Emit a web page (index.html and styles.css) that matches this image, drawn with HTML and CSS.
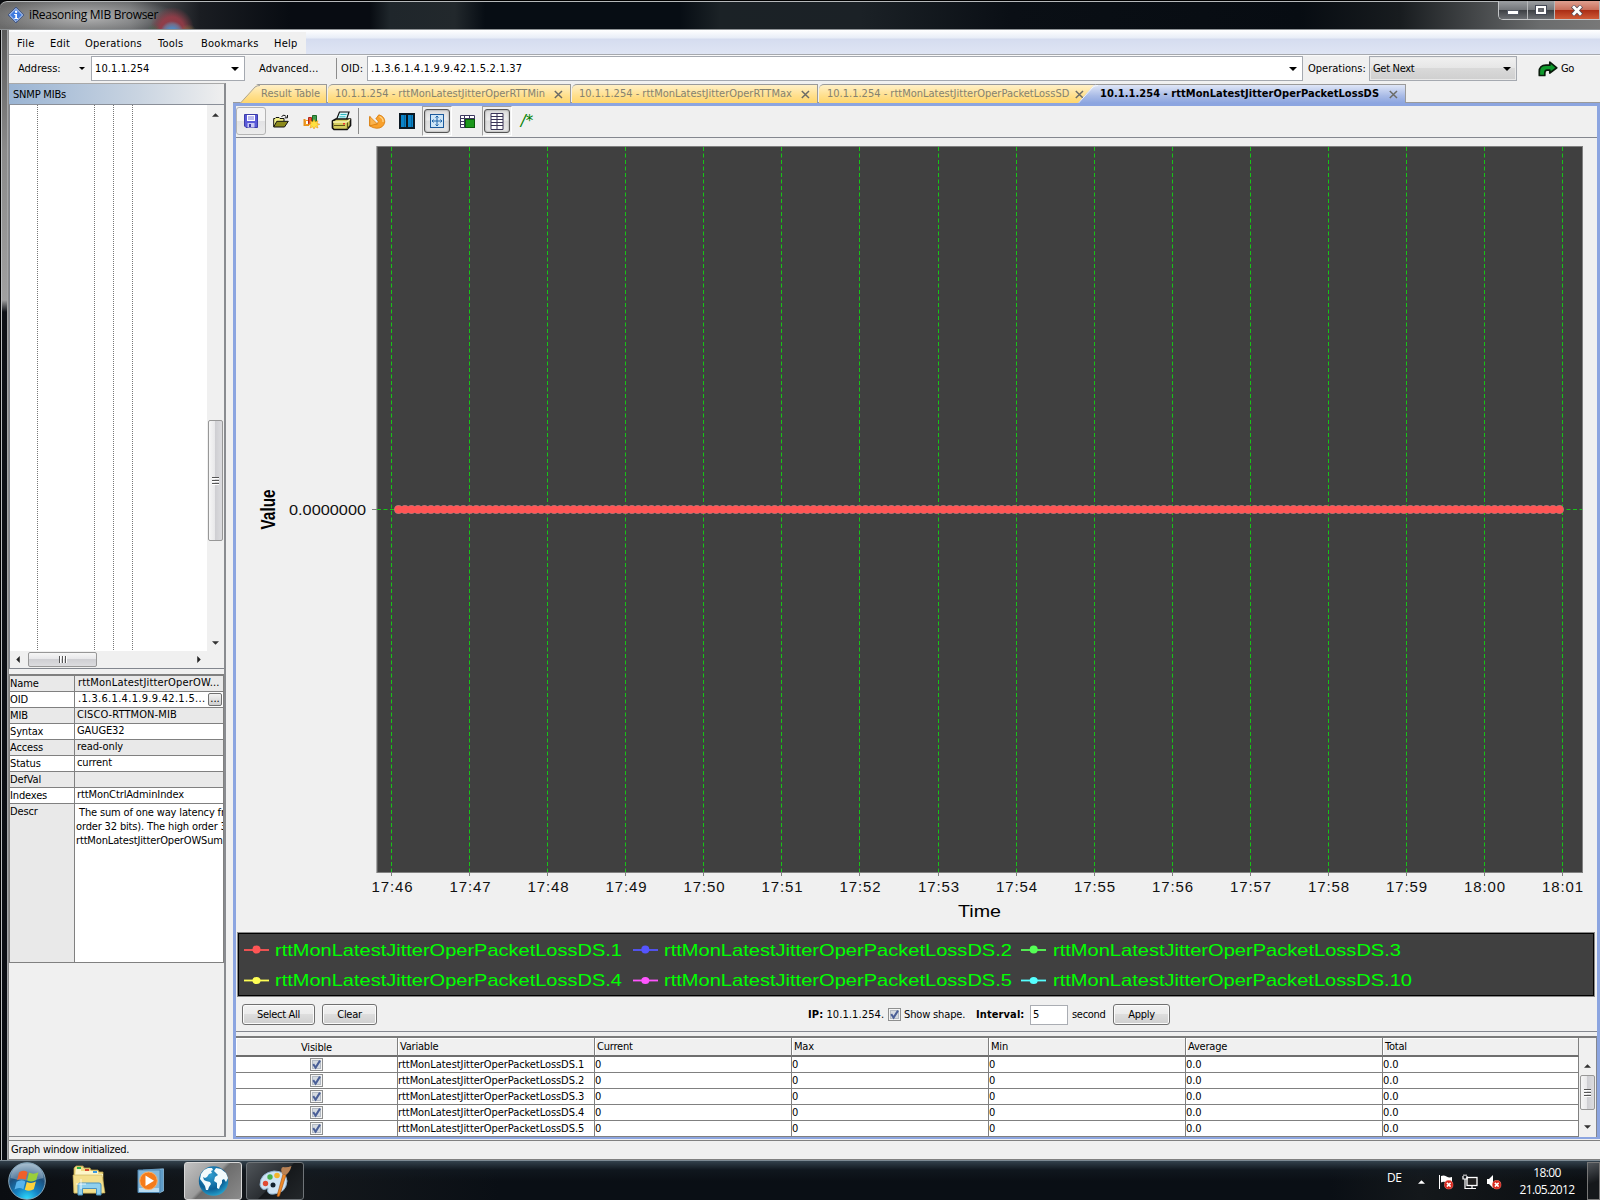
FILE: index.html
```html
<!DOCTYPE html>
<html lang="en">
<head>
<meta charset="utf-8">
<title>iReasoning MIB Browser</title>
<link rel="stylesheet" href="styles.css">
</head>
<body>
<svg class="defs" width="0" height="0">
  <defs>
    <symbol id="check" viewBox="0 0 13 13"><rect x=".5" y=".5" width="12" height="12" fill="#f4f4f4" stroke="#8e8f8f"/><rect x="2.5" y="2.5" width="8" height="8" fill="#d5dae0" stroke="#b4bbc4"/><path d="M3.2 6.2 5.6 9.6 10 2.6" fill="none" stroke="#4a5f97" stroke-width="2"/></symbol>
    <symbol id="close" viewBox="0 0 9 9"><path d="M.8 1 8 8M8 1 .8 8" fill="none" stroke="#6b6b66" stroke-width="1.5"/></symbol>
    <symbol id="down" viewBox="0 0 8 4"><path d="M0 0H8L4 4Z" fill="#000"/></symbol>
    <symbol id="badge" viewBox="0 0 10 10"><circle cx="5" cy="5" r="4.7" fill="#d8261c" stroke="#f08a80" stroke-width=".6"/><path d="M3 3 7 7M7 3 3 7" stroke="#fff" stroke-width="1.6"/></symbol>
  </defs>
</svg>

<header class="titlebar">
  <svg class="app-icon" width="16" height="16" viewBox="0 0 16 16"><path d="M8 0 16 8 8 16 0 8Z" fill="#123a8c"/><path d="M8 1.4 14.6 8 8 14.6 1.4 8Z" fill="#3f7be0" stroke="#e6eefc" stroke-width="1"/><circle cx="8.1" cy="4.8" r="1.2" fill="#fff"/><path d="M6.2 7H9V11H10V12H6.3V11H7.3V8H6.2Z" fill="#fff"/></svg>
  <span class="app-title">iReasoning MIB Browser</span>
  <div class="win-buttons">
    <div class="wb wb-min"><svg width="12" height="5" viewBox="0 0 12 5"><rect x=".5" y=".5" width="11" height="4" fill="#fff" stroke="#555a66"/></svg></div>
    <div class="wb wb-max"><svg width="12" height="10" viewBox="0 0 12 10"><rect x="1.5" y="1.5" width="9" height="7" fill="none" stroke="#444956" stroke-width="3"/><rect x="2" y="2" width="8" height="6" fill="#777" stroke="#fff" stroke-width="2"/><rect x="4" y="4" width="4" height="2" fill="#888" stroke="#444956" stroke-width=".8"/></svg></div>
    <div class="wb wb-close"><svg width="12" height="11" viewBox="0 0 12 11"><path d="M1.6 1 10.4 10M10.4 1 1.6 10" stroke="#534a55" stroke-width="4.4"/><path d="M2 1.2 10 9.8M10 1.2 2 9.8" stroke="#fff" stroke-width="2.8"/></svg></div>
  </div>
</header>

<div class="window">
  <div class="frame-left"></div>
  <div class="client">
    <nav class="menubar">
      <div class="menus"><span class="m1">File</span><span class="m2">Edit</span><span class="m3">Operations</span><span class="m4">Tools</span><span class="m5">Bookmarks</span><span class="m6">Help</span></div>
    </nav>
    <div class="addressbar">
      <span class="lbl-address">Address:</span>
      <svg class="addr-arrow" width="6" height="3"><use href="#down"/></svg>
      <div class="combo addr">10.1.1.254<svg width="8" height="4"><use href="#down"/></svg></div>
      <span class="lbl-adv">Advanced...</span>
      <i class="vsep"></i>
      <span class="lbl-oid">OID:</span>
      <div class="combo oid">.1.3.6.1.4.1.9.9.42.1.5.2.1.37<svg width="8" height="4"><use href="#down"/></svg></div>
      <span class="lbl-ops">Operations:</span>
      <div class="combo ops">Get Next<svg width="8" height="4"><use href="#down"/></svg></div>
      <svg class="go-icon" width="20" height="16" viewBox="0 0 20 16"><path d="M1.3 14.5V10.5Q1.3 4.2 8 4.2H11.8V1.2L18.8 6.8 11.8 12V9.2H9Q6.8 9.2 6.8 12.2V14.5Z" fill="#0e9a2c" stroke="#0a1c0c" stroke-width="1.7" stroke-linejoin="round"/></svg>
      <span class="lbl-go">Go</span>
    </div>

    <div class="content">
      <aside class="sidebar">
        <div class="side-title">SNMP MIBs</div>
        <div class="tree-area">
          <div class="tree"><i></i><i></i><i></i><i></i></div>
          <div class="vscroll">
            <svg class="up" width="7" height="4" viewBox="0 0 8 4"><path d="M0 4H8L4 0Z" fill="#333"/></svg>
            <div class="thumb"><i></i><i></i><i></i></div>
            <svg width="7" height="4" viewBox="0 0 8 4"><path d="M0 0H8L4 4Z" fill="#333"/></svg>
          </div>
        </div>
        <div class="hscroll">
          <svg width="4" height="7" viewBox="0 0 4 8"><path d="M4 0V8L0 4Z" fill="#222"/></svg>
          <div class="hthumb"><i></i><i></i><i></i></div>
          <svg class="right" width="4" height="7" viewBox="0 0 4 8"><path d="M0 0V8L4 4Z" fill="#222"/></svg>
        </div>
        <div class="details">
          <div class="drow alt"><b>Name</b><span class="namev">rttMonLatestJitterOperOW...</span></div>
          <div class="drow"><b>OID</b><span class="oidv">.1.3.6.1.4.1.9.9.42.1.5...</span><em>...</em></div>
          <div class="drow alt"><b>MIB</b><span class="mibv">CISCO-RTTMON-MIB</span></div>
          <div class="drow"><b>Syntax</b><span>GAUGE32</span></div>
          <div class="drow alt"><b>Access</b><span>read-only</span></div>
          <div class="drow"><b>Status</b><span>current</span></div>
          <div class="drow alt"><b>DefVal</b><span></span></div>
          <div class="drow"><b>Indexes</b><span>rttMonCtrlAdminIndex</span></div>
          <div class="drow descr alt"><b>Descr</b><span><q>The sum of one way latency fr</q><br>order 32 bits). The high order 3<br>rttMonLatestJitterOperOWSum</span></div>
        </div>
      </aside>

      <main class="pane">
        <div class="tabs">
          <div class="tab t1"><svg class="slant" width="20" height="19"><path d="M0 18.5 15 2Q17 .5 20 .5" fill="none" stroke="#a0a0a0"/></svg><span>Result Table</span></div>
          <div class="tab t2"><span>10.1.1.254 - rttMonLatestJitterOperRTTMin</span><svg width="9" height="9"><use href="#close"/></svg></div>
          <div class="tab t3"><span>10.1.1.254 - rttMonLatestJitterOperRTTMax</span><svg width="9" height="9"><use href="#close"/></svg></div>
          <div class="tab t4"><span>10.1.1.254 - rttMonLatestJitterOperPacketLossSD</span><svg width="9" height="9"><use href="#close"/></svg></div>
          <div class="tab t5"><svg class="slant" width="20" height="19"><path d="M0 18.5 15 2Q17 .5 20 .5" fill="none" stroke="#f4f6fc"/></svg><span>10.1.1.254 - rttMonLatestJitterOperPacketLossDS</span><svg width="9" height="9"><use href="#close"/></svg></div>
        </div>
        <div class="pane-body">
          <div class="toolbar">
            <div class="tool save"><svg width="14" height="14" viewBox="0 0 14 14"><path d="M.5.5H13.5V13.5H2L.5 12Z" fill="#5a5ad8" stroke="#3c3ca8"/><rect x="3" y="1" width="8" height="6" fill="#fff"/><path d="M4 3H10M4 5H10" stroke="#7a7ae0"/><rect x="3.5" y="9" width="7" height="4.5" fill="#c8c8f4"/><rect x="5" y="10" width="2" height="3" fill="#3c3ca8"/></svg></div>
            <div class="tool"><svg width="16" height="14" viewBox="0 0 16 14"><path d="M.7 12.8V4.5H2L3 3.5H6L7 4.5H11V7" fill="#f2f08a" stroke="#111"/><path d="M.7 13 3.8 7.3H15.3L11.5 13Z" fill="#8c8a1c" stroke="#111"/><path d="M8.5 2.5Q11-.3 13.3 2.5M14.5 1V3.8H11.8" fill="none" stroke="#111"/></svg></div>
            <div class="tool"><svg width="17" height="15" viewBox="0 0 17 15"><path d="M1.500 5V11H6" fill="none" stroke="#e8921c" stroke-width="2"/><path d="M2.500 10.500V6.500H5.500V10.500Z" fill="#fff" stroke="#f09a20"/><path d="M5.500 10.500V3.500H8.500V10.500Z" fill="#e8503a" stroke="#b02a18"/><path d="M9.500 8V1.500H13.500V8Z" fill="#3f9a4c" stroke="#1c6b26"/><path d="M11 5.500 12.300 8 15 6.700 14 9.400 16.800 10.300 14 11.300 15 14 12.200 12.800 11 15 9.800 12.800 7 14 8 11.300 5.200 10.300 8 9.400 7 6.700 9.700 8Z" fill="#ffe040" stroke="#f09a10" stroke-width=".6"/></svg></div>
            <div class="tool"><svg width="21" height="20" viewBox="0 0 21 20"><path d="M5.500 8.500 8.500 1H18L15.500 8.500Z" fill="#d6fafa" stroke="#111" stroke-width="1.2"/><path d="M9.500 3.500H15.500M8.500 5.800H14.500" stroke="#30b8c0"/><path d="M1.500 10 5 8H19.500V14.500L16 18.500H3L1.500 17Z" fill="#d4cd5c" stroke="#111" stroke-width="1.7" stroke-linejoin="round"/><path d="M2 11H15.800L19 8.300" fill="none" stroke="#f7f3b0" stroke-width="1.5"/><path d="M3 14.500H14M16.500 11.500V18" stroke="#5a5418" stroke-width="1.2"/><rect x="12" y="12" width="2" height="1.500" fill="#e33"/></svg></div>
            <i class="tsep"></i>
            <div class="tool"><svg width="17" height="15" viewBox="0 0 17 15"><path d="M.8 2.500V12L4 9.800Q6.500 11.200 8.300 9.800 10.300 7.500 8 5.500L6.800 4.800 9.800.8Q16 2.500 15.800 8 14.500 14.300 7.500 14.300 4 14 .8 12Z" fill="#f9a12c" stroke="#d57808" stroke-width=".8"/><path d="M10.500 2.500Q14.500 4.500 14 8" fill="none" stroke="#ffd68a" stroke-width="1.300"/><path d="M.8 2.500 8.300 9.800 .8 11.800Z" fill="#fbb44e" stroke="#d57808" stroke-width=".7"/></svg></div>
            <div class="tool"><svg width="16" height="16" viewBox="0 0 16 16"><rect x="1" y="1" width="14" height="14" fill="#0a84c8" stroke="#0b1822" stroke-width="2"/><path d="M8 1V15" stroke="#0b1822" stroke-width="2"/><path d="M5.5 2V14M12.500 2V14" stroke="#0768a2"/></svg></div>
            <div class="tool tog"><div><svg width="14" height="14" viewBox="0 0 14 14"><rect x=".5" y=".5" width="13" height="13" fill="#cfe6f7" stroke="#1c5a9c"/><path d="M7 2V12M2 7H12M5.5 3.500 7 2 8.500 3.500M5.500 10.500 7 12 8.500 10.500M3.500 5.500 2 7 3.500 8.500M10.500 5.500 12 7 10.500 8.500" fill="none" stroke="#1f64a8"/></svg></div></div>
            <div class="tool"><svg width="15" height="13" viewBox="0 0 15 13"><path d="M.5.5H14.500V12.500H.5ZM.5 3.500H14.500M.5 6.500H5M.5 9.500H5M4.500 .5V12.500M9.500.5V4" fill="#fff" stroke="#3d3960"/><rect x="5.500" y="4.500" width="9" height="8" fill="#1c981c" stroke="#0b5a0b"/></svg></div>
            <div class="tool tog"><div><svg width="14" height="17" viewBox="0 0 14 17"><path d="M1 .5H13V16.500H1ZM1 3.500H13M1 6.500H13M1 9.500H13M1 12.500H13M7 .5V16.500" fill="#fff" stroke="#3a3558"/></svg></div></div>
            <div class="tool cmt">/*</div>
          </div>

          <svg class="chart" width="1361" height="792" viewBox="236 138 1361 792">
            <rect x="377" y="146.500" width="1205.500" height="726" fill="#404040" stroke="#808080" stroke-width="1"/>
            <path d="M376.500 146V873" stroke="#a8a8a8"/>
            <path class="grid" d="M391.500 147V872M469.500 147V872M547.500 147V872M625.500 147V872M703.500 147V872M781.500 147V872M859.500 147V872M938.500 147V872M1016.500 147V872M1094.500 147V872M1172.500 147V872M1250.500 147V872M1328.500 147V872M1406.500 147V872M1484.500 147V872M1562.500 147V872M377 509.500H1582"/>
            <path d="M372 509.500H377M391.500 873V876M469.500 873V876M547.500 873V876M625.500 873V876M703.500 873V876M781.500 873V876M859.500 873V876M938.500 873V876M1016.500 873V876M1094.500 873V876M1172.500 873V876M1250.500 873V876M1328.500 873V876M1406.500 873V876M1484.500 873V876M1562.500 873V876" stroke="#808080"/>
            <path class="dots halo" d="M398.500 509.500H1560"/>
            <path d="M398 509.500H1560" stroke="#ff5555" stroke-width="6"/>
            <path class="dots" d="M398.500 509.500H1560"/>
            <g class="ticks" text-anchor="middle">
              <text x="392" y="892" textLength="41">17:46</text><text x="470" y="892" textLength="41">17:47</text><text x="548" y="892" textLength="41">17:48</text><text x="626" y="892" textLength="41">17:49</text><text x="704" y="892" textLength="41">17:50</text><text x="782" y="892" textLength="41">17:51</text><text x="860" y="892" textLength="41">17:52</text><text x="938.500" y="892" textLength="41">17:53</text><text x="1016.500" y="892" textLength="41">17:54</text><text x="1094.500" y="892" textLength="41">17:55</text><text x="1172.500" y="892" textLength="41">17:56</text><text x="1250.500" y="892" textLength="41">17:57</text><text x="1328.500" y="892" textLength="41">17:58</text><text x="1406.500" y="892" textLength="41">17:59</text><text x="1484.500" y="892" textLength="41">18:00</text><text x="1562.500" y="892" textLength="41">18:01</text>
            </g>
            <text class="ticks" x="289" y="514.500" textLength="77" lengthAdjust="spacingAndGlyphs">0.0000000</text>
            <text class="axis" x="958" y="917" textLength="43" lengthAdjust="spacingAndGlyphs">Time</text>
            <text class="axis-y" transform="translate(275 529.500) rotate(-90)" textLength="40" lengthAdjust="spacingAndGlyphs">Value</text>
          </svg>

          <div class="legend">
            <svg width="1354" height="61" viewBox="239 934 1354 61">
              <g stroke-width="1.800">
                <path d="M244 950H269" stroke="#ff5555"/><path d="M633 950H658" stroke="#5555ff"/><path d="M1021 950H1046" stroke="#55ff55"/>
                <path d="M244 980.500H269" stroke="#ffff55"/><path d="M633 980.500H658" stroke="#ff55ff"/><path d="M1021 980.500H1046" stroke="#55ffff"/>
              </g>
              <circle cx="256.500" cy="949.500" r="4" fill="#ff5555"/><circle cx="645.300" cy="949.500" r="4" fill="#5555ff"/><circle cx="1033.700" cy="949.500" r="4" fill="#55ff55"/>
              <ellipse cx="256.500" cy="980.500" rx="4" ry="3.500" fill="#ffff55"/><ellipse cx="645.300" cy="980.500" rx="4" ry="3.500" fill="#ff55ff"/><ellipse cx="1033.700" cy="980.500" rx="4" ry="3.500" fill="#55ffff"/>
              <g class="series">
                <text x="275" y="956" textLength="347" lengthAdjust="spacingAndGlyphs">rttMonLatestJitterOperPacketLossDS.1</text>
                <text x="664" y="956" textLength="348" lengthAdjust="spacingAndGlyphs">rttMonLatestJitterOperPacketLossDS.2</text>
                <text x="1053" y="956" textLength="348" lengthAdjust="spacingAndGlyphs">rttMonLatestJitterOperPacketLossDS.3</text>
                <text x="275" y="986" textLength="347" lengthAdjust="spacingAndGlyphs">rttMonLatestJitterOperPacketLossDS.4</text>
                <text x="664" y="986" textLength="348" lengthAdjust="spacingAndGlyphs">rttMonLatestJitterOperPacketLossDS.5</text>
                <text x="1053" y="986" textLength="359" lengthAdjust="spacingAndGlyphs">rttMonLatestJitterOperPacketLossDS.10</text>
              </g>
            </svg>
          </div>

          <div class="controls">
            <div class="btn sel">Select All</div>
            <div class="btn clr">Clear</div>
            <span class="ip"><b>IP:</b> 10.1.1.254.</span>
            <svg class="chk" width="13" height="13"><use href="#check"/></svg>
            <span class="shape">Show shape.</span>
            <b class="intv">Interval:</b>
            <div class="num">5</div>
            <span class="sec">second</span>
            <div class="btn app">Apply</div>
          </div>

          <div class="grid-wrap">
            <div class="table">
              <div class="tr th"><span class="c0">Visible</span><span>Variable</span><span>Current</span><span>Max</span><span>Min</span><span>Average</span><span>Total</span></div>
              <div class="tr"><span class="c0"><svg width="13" height="13"><use href="#check"/></svg></span><span>rttMonLatestJitterOperPacketLossDS.1</span><span>0</span><span>0</span><span>0</span><span>0.0</span><span>0.0</span></div>
              <div class="tr"><span class="c0"><svg width="13" height="13"><use href="#check"/></svg></span><span>rttMonLatestJitterOperPacketLossDS.2</span><span>0</span><span>0</span><span>0</span><span>0.0</span><span>0.0</span></div>
              <div class="tr"><span class="c0"><svg width="13" height="13"><use href="#check"/></svg></span><span>rttMonLatestJitterOperPacketLossDS.3</span><span>0</span><span>0</span><span>0</span><span>0.0</span><span>0.0</span></div>
              <div class="tr"><span class="c0"><svg width="13" height="13"><use href="#check"/></svg></span><span>rttMonLatestJitterOperPacketLossDS.4</span><span>0</span><span>0</span><span>0</span><span>0.0</span><span>0.0</span></div>
              <div class="tr"><span class="c0"><svg width="13" height="13"><use href="#check"/></svg></span><span>rttMonLatestJitterOperPacketLossDS.5</span><span>0</span><span>0</span><span>0</span><span>0.0</span><span>0.0</span></div>
            </div>
            <div class="tscroll">
              <svg width="7" height="4" viewBox="0 0 8 4"><path d="M0 4H8L4 0Z" fill="#333"/></svg>
              <div class="thumb"><i></i><i></i><i></i></div>
              <svg width="7" height="4" viewBox="0 0 8 4"><path d="M0 0H8L4 4Z" fill="#333"/></svg>
            </div>
          </div>
        </div>
      </main>
    </div>
    <footer class="status">Graph window initialized.</footer>
  </div>
</div>

<div class="taskbar">
  <svg class="orb" width="40" height="40" viewBox="0 0 40 40">
    <defs><radialGradient id="og" cx=".5" cy="1" r=".95"><stop offset="0" stop-color="#2fe0ff"/><stop offset=".35" stop-color="#1583c4"/><stop offset=".7" stop-color="#1c4f7c"/><stop offset="1" stop-color="#7e9fb8"/></radialGradient></defs>
    <circle cx="20" cy="20" r="18.300" fill="url(#og)" stroke="#88a8bc" stroke-width="1"/>
    <path d="M3.500 17Q5 3 20 2.500 35 3 36.500 17 20 22 3.500 17Z" fill="#fff" opacity=".28"/>
    <path d="M12 11.500Q15.500 8.500 20.500 11L18.700 18.800Q14 16.500 10 19.200Z" fill="#f0602a"/>
    <path d="M22 11.600Q26.500 14 31.500 11.300L29.200 19Q25 21.500 20.200 19.500Z" fill="#9bcf3a"/>
    <path d="M9.600 20.800Q14 18 18.400 20.400L16.400 28.300Q12 25.500 7.500 28.500Z" fill="#58b4ec"/>
    <path d="M19.800 21Q24.500 23 28.900 20.600L26.800 28.300Q22.500 31 17.800 28.800Z" fill="#fcd23c"/>
  </svg>
  <svg class="explorer" width="34" height="32" viewBox="0 0 34 32">
    <path d="M2 28V3L4 1H11L12 3H18L19 5H26L27 7H31V28Z" fill="#f1dc83" stroke="#b59b45" stroke-width=".8"/>
    <path d="M4 4H9V6H26V9H31V12H3Z" fill="#fdf6c8"/>
    <rect x="5" y="2" width="4" height="2" fill="#2db24a"/><rect x="13" y="4" width="4" height="2" fill="#d8482c"/><rect x="21" y="6" width="4" height="2" fill="#3a9ae0"/>
    <path d="M1 10H30L33 28H2Z" fill="#f3df8d" stroke="#c7ae58" stroke-width=".6"/>
    <path d="M6 30V20Q6 18 8 18H27Q29 18 29 20V30H24.500V23.500H10.500V30Z" fill="#8fd0ee" stroke="#4a93c0"/>
    <path d="M9 14V24M4 19H14" stroke="#fff" stroke-width=".8"/>
  </svg>
  <svg class="player" width="28" height="26" viewBox="0 0 28 26">
    <path d="M6 2 26.500 .8V23L22 25Z" fill="#5f9cc8" stroke="#9ccaea" stroke-width=".7"/><path d="M1 2H23V24.500H1Z" fill="#86b9dc" stroke="#4e86b0"/><path d="M2 20H22V24H2Z" fill="#b8dcf2"/>
    <circle cx="11.500" cy="12.800" r="8.800" fill="#f57c1c" stroke="#fbb26a"/><path d="M8.500 7.500V18L17 12.800Z" fill="#fff"/>
  </svg>
  <div class="tb-btn on">
    <svg width="32" height="32" viewBox="0 0 32 32"><defs><radialGradient id="gg" cx=".4" cy=".3" r=".8"><stop offset="0" stop-color="#2f9ed0"/><stop offset=".6" stop-color="#0c5f96"/><stop offset="1" stop-color="#2db5dc"/></radialGradient></defs><circle cx="16.500" cy="16" r="14.700" fill="url(#gg)"/><path d="M4 9 7 5 11 3 15 3 16 5 14 6 15 8 12 9 10 12 8 13 6 12 7 15 9 16 13 17 14 19 12 22 11 25 9 25 8 21 6 18 3 14Z" fill="#f2fafc"/><path d="M19 3 24 4 29 8 31 13 29 17 27 14 25 15 25 18 23 21 22 24 20 23 20 18 17 16 18 12 21 10 19 8 17 6Z" fill="#f2fafc"/></svg>
  </div>
  <div class="tb-btn">
    <svg width="34" height="32" viewBox="0 0 34 32"><path d="M16 6Q28 6 29 16 28 28 16 29 8 30 10 23 4 27 2 20 2 8 16 6Z" fill="#cfe3f3" stroke="#8fb2cf"/><circle cx="7.500" cy="18.500" r="2.700" fill="#e04a34"/><circle cx="12" cy="12" r="2.700" fill="#47b04c"/><circle cx="19" cy="10.500" r="2.800" fill="#f2b42c"/><circle cx="15" cy="20" r="2.500" fill="#14222e"/><path d="M19 31 25 9 28 10 21.500 31Q20 32 19 31Z" fill="#f08a28" stroke="#a04f10" stroke-width=".6"/><path d="M24 9Q22 3 25 2 29 3 33.500 1 32 7 28 10Z" fill="#b98255"/></svg>
  </div>
  <span class="lang">DE</span>
  <svg class="tray-up" width="7" height="4" viewBox="0 0 8 4"><path d="M0 4H8L4 0Z" fill="#fff"/></svg>
  <svg class="tray-i flag" width="16" height="16" viewBox="0 0 16 16"><path d="M1.500 1V15" stroke="#fff"/><path d="M3 2Q6 1 8.500 2.500T14 3V9Q11 10 8.500 8.500T3 8.500Z" fill="#fff"/><use href="#badge" x="6" y="6" width="9.500" height="9.500"/></svg>
  <svg class="tray-i net" width="16" height="16" viewBox="0 0 16 16"><rect x="5" y="3.500" width="10" height="8" fill="#222" stroke="#fff" stroke-width="1.300"/><path d="M6 14.500H14M10 12V14M1 2V5H5V2M2 .5V2M4 .5V2M3 5V14.500H6" fill="none" stroke="#fff" stroke-width="1.200"/></svg>
  <svg class="tray-i spk" width="16" height="16" viewBox="0 0 16 16"><path d="M1 5H3L7 1V14L3 10H1Z" fill="#fff"/><use href="#badge" x="6" y="6" width="9.500" height="9.500"/></svg>
  <div class="clock"><span>18:00</span><span>21.05.2012</span></div>
  <div class="showdesk"></div>
</div>
</body>
</html>
```
FILE: styles.css
```css
* { box-sizing: border-box; }
body { margin: 0; width: 1600px; height: 1200px; overflow: hidden; background: #0b0e12; display: flex; flex-direction: column; font: 11px/14px "DejaVu Sans Condensed", "DejaVu Sans", sans-serif; font-stretch: condensed; letter-spacing: -0.3px; color: #000; white-space: nowrap; }
svg { display: block; flex: none; }
.defs { position: absolute; }
i, em { font-style: normal; }

.titlebar { height: 30px; flex: none; display: flex; align-items: flex-start; padding-left: 8px; border-top: 1px solid #000; box-shadow: inset 0 1px #b5b8ba, inset 0 -1px #8f9396; border-radius: 7px 0 0 0;
  background: radial-gradient(circle at 172px 32px, rgba(80,140,195,.95) 0 5px, rgba(110,120,150,.8) 9px, transparent 12px), radial-gradient(circle at 188px 32px, rgba(150,140,70,.7), transparent 9px), radial-gradient(circle at 154px 30px, rgba(60,120,80,.6), transparent 7px), radial-gradient(circle at 172px 28px, rgba(150,60,72,.9) 0 12px, rgba(130,60,70,.5) 17px, transparent 22px), radial-gradient(ellipse 95px 20px at 85px 16px, rgba(200,200,200,.8), transparent), linear-gradient(90deg, #6a6a6a 0, #626466 130px, #1a1d22 200px, #080c12 290px, #080c12 370px, #1f262b 390px, #22282c 455px, #070d14 485px, #070d14 680px, #1b2226 720px, #1b2126 860px, #0a0f15 1010px, #070c12 1300px, #181c1f 1400px, #6a6c6d 1540px, #787878 1600px); }
.app-icon { margin-top: 6px; }
.app-title { font: 12px/16px "Open Sans", "Noto Sans", sans-serif; letter-spacing: -0.3px; margin: 6px 0 0 5px; }
.win-buttons { margin-left: auto; width: 102px; height: 19px; display: flex; border: 1px solid #c4c6c8; border-width: 0 0 1px 1px; border-radius: 0 0 0 5px; }
.wb { display: flex; justify-content: center; align-items: center; border-right: 1px solid #b6b8ba; background: linear-gradient(#9c9fa2, #74777b 48%, #3b3e42 50%, #6b6e72); }
.wb-min { width: 29px; padding-top: 4px; border-radius: 0 0 0 4px; }
.wb-max { width: 27px; }
.wb-close { flex: 1; background: linear-gradient(#dfa090, #c9705c 48%, #a92b13 50%, #cf5a36); }

.window { flex: 1; display: flex; min-height: 0; }
.frame-left { width: 8px; flex: none; background: linear-gradient(90deg, #000 0 1px, #b9bcbe 1px 2px, transparent 2px 7px, #a5a7a9 7px 8px), linear-gradient(#5a5a5a 0, #8a8a8a 120px, #a0a0a0 270px, #0e1116 282px, #0a0d12 100%); }
.client { flex: 1; min-width: 0; display: flex; flex-direction: column; background: #f0f0f0; border-left: 1px solid #8b8b8b; }
.menubar { height: 25px; flex: none; background: linear-gradient(#fff 0, #e8edf7 8px, #d5dcef 9px, #dfe5f4 100%); border-bottom: 1px solid #a6a9ae; padding: 2px 0 0 0; }
.menus { width: 297px; height: 22px; background: #f0f0f0; display: flex; align-items: center; padding: 1px 0 0 8px; letter-spacing: 0.25px; }
.menus span { flex: none; }
.m1 { width: 33px; } .m2 { width: 35px; } .m3 { width: 73px; } .m4 { width: 43px; } .m5 { width: 73px; }
.addressbar { height: 28px; flex: none; display: flex; align-items: center; padding: 0 0 2px 9px; border-top: 1px solid #fafafa; }
.addressbar span { flex: none; }
.lbl-address { width: 61px; letter-spacing: 0; }
.addr-arrow { margin-right: 6px; }
.combo { height: 25px; flex: none; border: 1px solid #a5a9b0; background: #fff; display: flex; align-items: center; justify-content: space-between; padding: 0 5px 0 3px; }
.combo svg { margin-top: 1px; }
.addr { width: 154px; margin-right: 14px; letter-spacing: 0.1px; }
.lbl-adv { width: 77px; letter-spacing: 0.1px; }
.vsep { width: 1px; height: 21px; background: #8c8c8c; margin-right: 4px; flex: none; }
.lbl-oid { width: 26px; letter-spacing: 0.1px; }
.oid { width: 936px; letter-spacing: 0.22px; margin-right: 5px; }
.lbl-ops { width: 61px; letter-spacing: 0; }
.ops { width: 148px; background: linear-gradient(#f1f1f1, #e6e6e6 48%, #d9d9d9 50%, #cfcfcf); box-shadow: inset 0 0 0 1px #e9e9e9; margin-right: 21px; }
.go-icon { margin-right: 3px; }

.content { flex: 1; display: flex; min-height: 0; }
.sidebar { width: 217px; flex: none; margin-bottom: 3px; border: 1px solid #8a8c90; border-left-width: 0; border-right-width: 2px; border-top-color: #a9a9a9; display: flex; flex-direction: column; }
.side-title { height: 21px; flex: none; padding: 4px 0 0 4px; background: linear-gradient(90deg, #9ab4d3, #c9d4e1 60%, #efefef); border-bottom: 1px solid #8a8f98; letter-spacing: -0.2px; }
.tree-area { height: 546px; flex: none; display: flex; }
.tree { width: 198px; background: #fff; display: flex; padding-left: 27px; border-left: 1px solid #82868e; }
.tree i { width: 1px; margin-right: 18px; background: repeating-linear-gradient(#777 0 1px, #fff 1px 2px); flex: none; }
.tree i:first-child { margin-right: 56px; }
.vscroll { flex: 1; background: #f0f0f0; padding: 8px 1px 0 0; display: flex; flex-direction: column; align-items: center; }
.vscroll .thumb { height: 121px; width: 15px; margin: 303px 0 100px; }
.thumb { border: 1px solid #979797; border-radius: 2px; background: linear-gradient(90deg, #f6f6f6, #e8e8ea 45%, #cfcfd3 50%, #dcdcdf); display: flex; flex-direction: column; align-items: center; justify-content: center; gap: 1px; flex: none; }
.thumb i { width: 7px; height: 2px; border-top: 1px solid #555; background: #fff; }
.hscroll { height: 18px; flex: none; border-left: 1px solid #82868e; border-bottom: 1px solid #82868e; display: flex; align-items: center; padding-left: 6px; background: #f0f0f0; padding-bottom: 1px; }
.hthumb { width: 69px; height: 15px; margin-left: 8px; border: 1px solid #979797; border-radius: 2px; background: linear-gradient(#f6f6f6, #e8e8ea 45%, #cfcfd3 50%, #dcdcdf); display: flex; align-items: center; justify-content: center; gap: 1px; }
.hthumb i { width: 2px; height: 7px; border-left: 1px solid #555; background: #fff; }
.hscroll .right { margin-left: 100px; }
.details { width: 215px; margin-top: 5px; border: 1px solid #808080; border-top-width: 2px; border-bottom: 0; flex: none; }
.drow { height: 16px; display: flex; background: #fff; border-bottom: 1px solid #808080; overflow: hidden; }
.drow.alt { background: #e9e9e9; }
.drow b { width: 65px; flex: none; border-right: 1px solid #808080; font-weight: normal; padding: 1px 0 0 0; letter-spacing: -0.15px; }
.drow span { padding-left: 2px; letter-spacing: -0.1px; }
.drow em { width: 14px; height: 13px; border: 1px solid #707070; border-radius: 2px; background: linear-gradient(#f2f2f2, #cfcfcf); margin: 1px 1px 0 auto; line-height: 9px; text-align: center; letter-spacing: 0; }
.drow .oidv { letter-spacing: .3px; padding-left: 3px; }
.drow .namev { letter-spacing: .18px; padding-left: 3px; }
.drow .mibv { letter-spacing: 0.1px; }
.drow.descr { height: 159px; }
.descr span { background: #fff; flex: 1; padding: 2px 0 0 1px; min-width: 0; }
.drow.descr span { letter-spacing: -0.15px; padding-left: 1px; }
.descr q { quotes: none; padding-left: 3px; }

.pane { flex: 1; min-width: 0; margin-left: 7px; display: flex; flex-direction: column; }
.tabs { height: 19px; margin-top: 1px; flex: none; display: flex; padding-left: 7px; border-bottom: 1px solid #9a9a9a; }
.tab { height: 19px; flex: none; display: flex; align-items: center; color: #85826f; border-top: 1px solid #9a9a9a; border-right: 1px solid #9a9a9a; border-radius: 5px 0 0 0; background: linear-gradient(#fff0c8, #ffdf8c 60%, #ffd66c); padding-left: 7px; margin-right: 1px; letter-spacing: 0; }
.tab > svg:last-child { margin-left: auto; margin-right: 7px; }
.slant { position: absolute; left: 0; top: 0; }
.t1, .t5 { position: relative; clip-path: polygon(0 100%, 16px 1px, 18px 0, 100% 0, 100% 100%); }
.t1 { width: 87px; padding-left: 21px; }
.t2 { width: 243px; } .t3 { width: 246px; } .t4 { width: 276px; padding-left: 8px; }
.t4 > svg:last-child { margin-right: 10px; }
.t5 { width: 328px; margin-left: -18px; padding-left: 22px; color: #000; font-weight: bold; background: linear-gradient(#dfe6f7, #a9bbe6 60%, #8ca5e0); letter-spacing: 0.06px; }
.pane-body { flex: 1; display: flex; flex-direction: column; border: 3px solid #8ca5e0; border-bottom-width: 2px; margin-bottom: 1px; min-height: 0; }
.toolbar { height: 32px; flex: none; display: flex; align-items: center; border-bottom: 1px solid #84878f; padding-bottom: 1px; }
.tool { width: 30px; height: 30px; flex: none; display: flex; align-items: center; justify-content: center; }
.save { height: 28px; border: 1px solid #b4b4b4; border-radius: 3px; background: linear-gradient(#f4f4f4 48%, #e2e2e4 50%, #ececec); }
.tsep { width: 1px; height: 26px; background: #8c8c8c; margin: 0 3px 0 2px; }
.tog { border: 1px solid #a0a0a0; border-right-color: #fff; border-bottom-color: #fff; }
.tog div { width: 26px; height: 24px; border: 1px solid #555; border-radius: 3px; background: linear-gradient(#dcdcdc, #eee 45%, #ddd 50%, #e8e8e8); box-shadow: inset 0 0 2px #777; display: flex; align-items: center; justify-content: center; }
.cmt { color: #008000; font: italic 15px "DejaVu Sans", sans-serif; letter-spacing: 0; }
.chart { margin-right: -3px; }
.grid { stroke: #17c417; stroke-width: 1; stroke-dasharray: 4 2.5; fill: none; }
.dots { stroke: #ff5555; stroke-width: 8; stroke-linecap: round; stroke-dasharray: 0 6.486; fill: none; }
.halo { stroke: #8f8080; stroke-width: 9; }
.ticks { font: 15px "Liberation Sans", Arial, sans-serif; letter-spacing: 0; fill: #111; }
.axis { font: 17px "Liberation Sans", Arial, sans-serif; letter-spacing: 0; }
.axis-y { font: bold 20px "Liberation Sans", Arial, sans-serif; letter-spacing: 0; }
.legend { height: 63px; width: 1356px; margin: 3px 0 0 2px; flex: none; background: #404040; border: 1px solid #000; outline: 1px solid #888; }
.series { font: 17px "Liberation Sans", Arial, sans-serif; letter-spacing: 0; fill: #00ff00; }
.controls { height: 35px; flex: none; display: flex; align-items: center; padding: 2px 0 0 6px; }
.btn { height: 21px; border: 1px solid #707070; border-radius: 3px; background: linear-gradient(#f2f2f2, #ebebeb 48%, #dddddd 50%, #cfcfcf); box-shadow: inset 0 0 0 1px #fbfbfb; display: flex; align-items: center; justify-content: center; flex: none; }
.sel { width: 73px; margin-right: 7px; } .clr { width: 55px; margin-right: 431px; } .app { width: 57px; }
.ip { width: 80px; flex: none; letter-spacing: 0.1px; }
.chk { margin-right: 3px; }
.shape { width: 72px; letter-spacing: -0.15px; }
.intv { width: 54px; letter-spacing: 0.1px; }
.num { width: 38px; height: 20px; border: 1px solid #aaadb3; background: #fff; padding: 2px 0 0 2px; margin-right: 4px; }
.sec { width: 41px; }
.grid-wrap { flex: 1; display: flex; border-top: 1px solid #84878f; background: #f0f0f0; padding-top: 4px; min-height: 0; }
.table { width: 1343px; flex: none; border-top: 2px solid #7b7b7b; background: #fff; }
.tr { display: grid; grid-template-columns: 162px repeat(5, 197px) 196px; height: 16px; letter-spacing: -0.06px; }
.tr span { border-right: 1px solid #808080; border-bottom: 1px solid #808080; line-height: 15px; overflow: hidden; }
.tr .c0 { display: flex; justify-content: center; align-items: center; padding: 0; }
.th { height: 19px; background: #f0f0f0; letter-spacing: -0.2px; }
.th span { padding: 1px 0 0 2px; border-bottom: 2px solid #6e6e6e; box-shadow: inset 1px 1px #fff; }
.th .c0 { padding-top: 1px; }
.tscroll { flex: 1; border-top: 2px solid #7b7b7b; border-right: 1px solid #84878f; display: flex; flex-direction: column; align-items: center; padding-top: 26px; }
.tscroll .thumb { width: 15px; height: 35px; margin: 7px 0 15px; }
.status { height: 20px; flex: none; border-top: 1px solid #808080; border-bottom: 1px solid #808080; padding: 2px 0 0 2px; letter-spacing: -0.27px; }

.taskbar { height: 40px; flex: none; display: flex; align-items: center; border-top: 1px solid #7d8a93; color: #fff; background: linear-gradient(#33414c, rgba(20,28,36,.6) 9px, rgba(0,0,0,0) 20px), linear-gradient(90deg, #0a0d11, #14181c 300px, #0a0f15 500px, #0a0f15 1330px, #14181b 1420px, #0a0d10); padding-left: 7px; }
.explorer { margin-left: 25px; } .player { margin: 0 19px 0 31px; }
.tb-btn { width: 58px; height: 38px; border: 1px solid #6f7478; border-radius: 3px; background: linear-gradient(135deg, #50555a, #2a2e32 50%, #15181b 52%, #23272a); display: flex; align-items: center; justify-content: center; margin-right: 4px; flex: none; }
.on { border-color: #d8d8d8; background: linear-gradient(135deg, #c2c2c2, #9a9a9a 45%, #6c6c6c 50%, #8b8b8b); }
.lang { margin-left: 1079px; width: 31px; font: 12px/16px "Open Sans", sans-serif; letter-spacing: -0.4px; margin-top: -6px; flex: none; }
.tray-up { margin-right: 13px; margin-top: 2px; }
.tray-i { margin-right: 8px; margin-top: 2px; }
.clock { width: 78px; margin-left: -2px; display: flex; flex-direction: column; align-items: center; font: 12px/17px "Open Sans", sans-serif; letter-spacing: -0.6px; flex: none; }
.showdesk { width: 13px; height: 38px; margin-left: auto; border: 1px solid #777; background: linear-gradient(160deg, #50555a, #15181b 55%); flex: none; }
```
